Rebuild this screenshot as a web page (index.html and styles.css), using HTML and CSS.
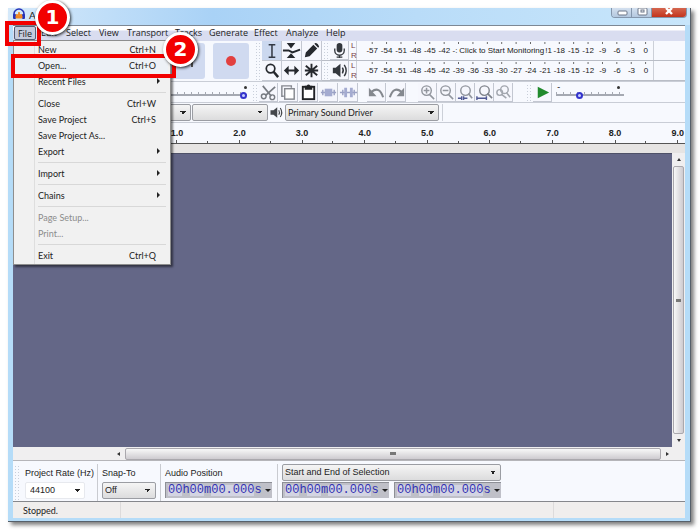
FILE: index.html
```html
<!DOCTYPE html>
<html lang="en">
<head>
    <meta charset="UTF-8">
    <meta name="viewport" content="width=device-width, initial-scale=1.0">
    <title>Audacity</title>
    <link rel="stylesheet" href="styles.css">
</head>
<body>

<div class="window">
    <!-- Title Bar -->
    <div class="titlebar">
        <svg class="logo" viewBox="0 0 12 12"><path d="M1 8V6a5 5 0 0 1 10 0v2" fill="none" stroke="#2433b8" stroke-width="1.6"/><rect x="0" y="6" width="3" height="5" rx="1" fill="#2433b8"/><rect x="9" y="6" width="3" height="5" rx="1" fill="#2433b8"/><path d="M3 8l1-2 1 3 1-5 1 5 1-3 1 2v2H3z" fill="#f08a24" stroke="#f08a24"/></svg>
        <span>Audacity</span>
        <div class="caption-buttons">
            <button aria-label="Minimize"><svg viewBox="0 0 20 10"><rect x="6" y="3" width="9" height="4" rx="1" fill="#fff" stroke="#6c7688"/></svg></button>
            <button aria-label="Maximize"><svg viewBox="0 0 20 10"><rect x="6" y="0" width="9" height="7" rx="1" fill="#fff" stroke="#6c7688"/><rect x="9" y="2" width="3" height="2" fill="none" stroke="#6c7688"/></svg></button>
            <button class="close" aria-label="Close"><svg viewBox="0 0 34 10"><path d="M14 0l6 6M20 0l-6 6" stroke="#fff" stroke-width="2.4"/></svg></button>
        </div>
    </div>

    <div class="client">
        <!-- Menu Bar -->
        <div class="menubar">
            <button class="open">File</button>
            <button class="m-edit">Edit</button>
            <button class="m-select">Select</button>
            <button class="m-view">View</button>
            <button class="m-transport">Transport</button>
            <button class="m-tracks">Tracks</button>
            <button class="m-generate">Generate</button>
            <button class="m-effect">Effect</button>
            <button class="m-analyze">Analyze</button>
            <button class="m-help">Help</button>
        </div>

        <!-- File Menu -->
        <div class="menu">
            <button>New<span>Ctrl+N</span></button>
            <button class="hot">Open...<span>Ctrl+O</span></button>
            <button>Recent Files<i></i></button>
            <hr>
            <button>Close<span>Ctrl+W</span></button>
            <button>Save Project<span>Ctrl+S</span></button>
            <button>Save Project As...</button>
            <button>Export<i></i></button>
            <hr>
            <button>Import<i></i></button>
            <hr>
            <button>Chains<i></i></button>
            <hr>
            <button disabled>Page Setup...</button>
            <button disabled>Print...</button>
            <hr>
            <button>Exit<span>Ctrl+Q</span></button>
        </div>

        <!-- Toolbars -->
        <div class="top-row">
            <div class="transport">
                <button aria-label="Skip to end"><svg viewBox="0 0 36 36"><path d="M10 12l9 6-9 6z" fill="#555"/><path d="M23 12v12" stroke="#555" stroke-width="2"/></svg></button>
                <button aria-label="Record"><svg viewBox="0 0 36 36"><circle cx="18" cy="18" r="5" fill="#e2403f"/></svg></button>
            </div>
            <div class="grip"></div>
            <div class="tools">
                <button class="tool on" aria-label="Selection tool"><svg viewBox="0 0 20 20"><path d="M7 4h7M7 17h7M10.500 4v13" stroke="#333944" stroke-width="1.600"/></svg></button>
                <button class="tool" aria-label="Envelope tool"><svg viewBox="0 0 20 20"><path d="M1 10h6l4 2 8-3" fill="none" stroke="#26292e" stroke-width="2"/><path d="M5 2h9l-4.500 6zM5 18h9l-4.500-5z" fill="#26292e"/></svg></button>
                <button class="tool" aria-label="Draw tool"><svg viewBox="0 0 20 20"><path d="M3 17l1-5 8-8 4 4-8 8zM13 3l1-1q3 0 4 4l-1 1z" fill="#26292e"/></svg></button>
                <button class="tool" aria-label="Zoom tool"><svg viewBox="0 0 20 20"><circle cx="9" cy="8" r="4.500" fill="none" stroke="#26292e" stroke-width="1.800"/><path d="M12 11l5 6" stroke="#26292e" stroke-width="2.600"/></svg></button>
                <button class="tool" aria-label="Time shift tool"><svg viewBox="0 0 20 20"><path d="M2 10l5-5v4h6V5l5 5-5 5v-4H7v4z" fill="#26292e"/></svg></button>
                <button class="tool" aria-label="Multi tool"><svg viewBox="0 0 20 20"><path d="M10 3v14M3 10h14M4 5l12 10M16 5L4 15" stroke="#26292e" stroke-width="2"/></svg></button>
            </div>
            <div class="meters">
                <div class="meter">
                    <div class="grip"></div>
                    <button class="tool" aria-label="Record meter"><svg viewBox="0 0 20 20"><rect x="7" y="2" width="6" height="10" rx="3" fill="#33373d"/><path d="M5 8v2a5 5 0 0 0 10 0V8M10 15v3M7 17h6" fill="none" stroke="#33373d" stroke-width="1.400"/></svg></button>
                    <div class="lr">L<br>R</div>
                    <div class="scale">
                        <span>-57</span><span>-54</span><span>-51</span><span>-48</span><span>-45</span><span>-42</span><span class="cut">-:</span><span class="monitor">Click to Start Monitoring</span><span class="cut">!1</span><span>-18</span><span>-15</span><span>-12</span><span>-9</span><span>-6</span><span>-3</span><span>0</span>
                    </div>
                </div>
                <div class="meter">
                    <div class="grip"></div>
                    <button class="tool" aria-label="Playback meter"><svg viewBox="0 0 20 20"><path d="M3 7h3l5-4v14l-5-4H3z" fill="#33373d"/><path d="M13 7q2 3 0 6M15 4q4 6 0 12" fill="none" stroke="#33373d" stroke-width="1.500"/></svg></button>
                    <div class="lr">L<br>R</div>
                    <div class="scale">
                        <span>-57</span><span>-54</span><span>-51</span><span>-48</span><span>-45</span><span>-42</span><span>-39</span><span>-36</span><span>-33</span><span>-30</span><span>-27</span><span>-24</span><span>-21</span><span>-18</span><span>-15</span><span>-12</span><span>-9</span><span>-6</span><span>-3</span><span>0</span>
                    </div>
                </div>
            </div>
        </div>

        <div class="edit-row">
            <div class="mixer"><input type="range" min="0" max="100" value="100" aria-label="Recording volume"></div>
            <div class="grip"></div>
            <div class="group">
                <button class="tool" aria-label="Cut"><svg viewBox="0 0 20 20"><path d="M4 3l9 11M17 4L7 13" stroke="#777b82" stroke-width="1.800"/><circle cx="5" cy="14" r="2.500" fill="none" stroke="#777b82" stroke-width="1.500"/><circle cx="14" cy="15" r="2.500" fill="none" stroke="#777b82" stroke-width="1.500"/></svg></button>
                <button class="tool" aria-label="Copy"><svg viewBox="0 0 20 20"><path d="M5 14H3V3h10v2" fill="none" stroke="#85888f" stroke-width="1.500"/><rect x="6" y="6" width="10" height="11" fill="#fff" stroke="#85888f" stroke-width="1.500"/></svg></button>
                <button class="tool" aria-label="Paste"><svg viewBox="0 0 20 20"><rect x="4" y="4" width="12" height="13" fill="#fff" stroke="#202226" stroke-width="2"/><path d="M6 7V3h2q2-3 4 0h2v4z" fill="#202226"/></svg></button>
                <button class="tool" aria-label="Trim"><svg viewBox="0 0 20 20"><path d="M2 10h16M4 7v6M16 7v6" stroke="#9aa1c4" stroke-width="1.500"/><rect x="6" y="6" width="8" height="8" fill="#a4abd0"/></svg></button>
                <button class="tool" aria-label="Silence"><svg viewBox="0 0 20 20"><path d="M1 10h18M4 7v6M16 7v6" stroke="#9aa1c4" stroke-width="1.500"/><path d="M7 5v10M13 5v10" stroke="#a4abd0" stroke-width="3"/></svg></button>
            </div>
            <div class="group history">
                <button class="tool" aria-label="Undo"><svg viewBox="0 0 20 20"><path d="M5 9q8-6 12 6" fill="none" stroke="#85898f" stroke-width="2.200"/><path d="M2 5v9h8z" fill="#85898f"/></svg></button>
                <button class="tool" aria-label="Redo"><svg viewBox="0 0 20 20"><path d="M15 9Q7 3 3 15" fill="none" stroke="#85898f" stroke-width="2.200"/><path d="M18 5v9h-8z" fill="#85898f"/></svg></button>
            </div>
            <div class="group zooms">
                <button class="tool" aria-label="Zoom in"><svg viewBox="0 0 20 20"><circle cx="9" cy="8" r="5" fill="none" stroke="#92969e" stroke-width="1.500"/><path d="M12 12l5 5M6 8h6M9 5v6" stroke="#92969e" stroke-width="1.600"/></svg></button>
                <button class="tool" aria-label="Zoom out"><svg viewBox="0 0 20 20"><circle cx="9" cy="8" r="5" fill="none" stroke="#92969e" stroke-width="1.500"/><path d="M12 12l5 5M6 8h6" stroke="#92969e" stroke-width="1.600"/></svg></button>
                <button class="tool" aria-label="Fit selection"><svg viewBox="0 0 20 20"><circle cx="10" cy="8" r="5" fill="none" stroke="#92969e" stroke-width="1.500"/><path d="M13 11l4 5" stroke="#92969e" stroke-width="1.800"/><path d="M2 16h4M8 16h4M6 14v4M8 14v4" stroke="#515a94" stroke-width="1.500"/></svg></button>
                <button class="tool" aria-label="Fit project"><svg viewBox="0 0 20 20"><circle cx="10" cy="8" r="5" fill="none" stroke="#7f838b" stroke-width="1.500"/><path d="M13 11l5 5" stroke="#7f838b" stroke-width="1.800"/><path d="M2 16h10M2 14v4M12 14v4" stroke="#515a94" stroke-width="1.500"/></svg></button>
                <button class="tool" aria-label="Zoom toggle"><svg viewBox="0 0 20 20"><circle cx="11" cy="7" r="4" fill="none" stroke="#a2a6ae" stroke-width="1.500"/><circle cx="6" cy="10" r="3" fill="none" stroke="#a2a6ae" stroke-width="1.500"/><path d="M13 10l4 5M8 12l5 4" stroke="#a2a6ae" stroke-width="1.600"/></svg></button>
            </div>
            <div class="grip play-grip"></div>
            <button class="tool" aria-label="Play at speed"><svg viewBox="0 0 20 20"><path d="M5 4l12 6-12 6z" fill="#218a2d"/></svg></button>
            <div class="speed"><input type="range" min="0" max="100" value="32" aria-label="Playback speed"></div>
        </div>

        <div class="device-row">
            <select class="host" aria-label="Audio host"><option></option></select>
            <select class="input-device" aria-label="Recording device"><option></option></select>
            <svg viewBox="0 0 20 20"><path d="M2 7h4l5-4v14l-5-4H2z" fill="#44474c"/><path d="M13 7q2 3 0 6M15 4q4 6 0 12" fill="none" stroke="#44474c" stroke-width="1.500"/></svg>
            <select class="output-device" aria-label="Playback device"><option>Primary Sound Driver</option></select>
            <div class="edge"></div>
        </div>

        <!-- Timeline -->
        <div class="ruler">
            <span></span><span>1.0</span><span>2.0</span><span>3.0</span><span>4.0</span><span>5.0</span><span>6.0</span><span>7.0</span><span>8.0</span><span>9.0</span>
        </div>
        <div class="workspace">
            <div class="tracks"></div>
            <div class="vscroll"><i class="up"></i><div class="thumb"></div><i class="down"></i></div>
        </div>
        <div class="hscroll"><i class="left"></i><div class="thumb"></div><i class="right"></i></div>

        <!-- Selection Toolbar -->
        <div class="selection">
            <div class="grip"></div>
            <div class="field rate">
                <label for="rate">Project Rate (Hz)</label>
                <select id="rate"><option>44100</option></select>
            </div>
            <div class="field snap">
                <label for="snap">Snap-To</label>
                <select id="snap"><option>Off</option></select>
            </div>
            <div class="field position">
                <label for="position">Audio Position</label>
                <div class="time"><input id="position" type="text" value="00h00m00.000s"></div>
            </div>
            <div class="field range">
                <select aria-label="Selection mode"><option>Start and End of Selection</option></select>
                <div class="times">
                    <div class="time"><input type="text" value="00h00m00.000s" aria-label="Selection start"></div>
                    <div class="time"><input type="text" value="00h00m00.000s" aria-label="Selection end"></div>
                </div>
            </div>
        </div>
        <div class="status"><span>Stopped.</span><span></span><span></span></div>
    </div>

    <!-- Step Markers -->
    <div class="outline outline-file"></div>
    <div class="outline outline-open"></div>
    <div class="step step-one">1</div>
    <div class="step step-two">2</div>
</div>

</body>
</html>
```
FILE: styles.css
```css
* {
    box-sizing: border-box;
}

body {
    margin: 0;
    padding: 8px;
    background: #fff;
    font-family: Lato, "Liberation Sans", sans-serif;
    font-size: 9px;
    color: #222;
}

button, select, input {
    font: inherit;
    color: inherit;
    margin: 0;
    padding: 0;
}

button {
    border: 0;
    background: none;
}

/* Window Frame */
.window {
    position: relative;
    height: calc(100vh - 17px);
    display: flex;
    flex-direction: column;
    padding: 0 5px 3px;
    margin-right: 1px;
    background: #b5dcf8;
    border-right: 1px solid #56606a;
    border-bottom: 1px solid #56606a;
    box-shadow: 3px 3px 4px rgba(0, 0, 0, 0.5);
}

.titlebar {
    display: flex;
    flex: none;
    height: 17px;
    margin: 0 -5px;
    padding-left: 5px;
    gap: 4px;
    background: linear-gradient(90deg, #d5e9fa, #a9d2f6 30%, #b9dcf8 60%, #c8e6fb);
    font-size: 10px;
    line-height: 14px;
}

.logo {
    width: 12px;
    height: 12px;
}

.caption-buttons {
    display: flex;
    height: 10px;
    margin: 0 3px 0 auto;
    border: 1px solid #8496ac;
    border-top: 0;
    border-radius: 0 0 4px 4px;
    overflow: hidden;
}

.caption-buttons button {
    width: 20px;
    height: 9px;
    background: linear-gradient(#d3e0ef, #b4c8df);
    border-right: 1px solid #8496ac;
}

.caption-buttons svg {
    display: block;
    height: 10px;
}

.caption-buttons .close {
    width: 34px;
    background: linear-gradient(#d4664f, #c3341c);
    border: 0;
}

.client {
    position: relative;
    flex: 1;
    min-height: 0;
    display: flex;
    flex-direction: column;
    background: #f7f9fe;
    border-top: 1px solid #7d8894;
}

/* Menu Bar */
.menubar {
    display: flex;
    flex: none;
    height: 15px;
    padding-left: 1px;
    background: linear-gradient(#fff 0, #fff 4px, #d9ddf0 5px, #d9ddf0);
    font-family: "Open Sans", sans-serif;
    line-height: 14px;
}

.menubar button {
    text-align: left;
    white-space: nowrap;
    height: 14px;
}

.menubar .open {
    width: 22px;
    border: 1px solid #555e74;
    border-radius: 2px;
    background: #c5cbdd;
    line-height: 11px;
    text-align: center;
}

.menubar .m-edit { width: 30px; padding-left: 5px; }
.m-select { width: 33px; }
.m-view { width: 28px; }
.m-transport { width: 48px; }
.m-tracks { width: 34px; }
.m-generate { width: 45px; }
.m-effect { width: 32px; }
.m-analyze { width: 40px; }

/* File Menu */
.menu {
    position: absolute;
    top: 14px;
    left: 0;
    z-index: 2;
    width: 158px;
    padding: 0 2px 1px;
    background: linear-gradient(90deg, #f1f1f1 20px, #dedede 20px, #dedede 21px, #f1f1f1 21px);
    border: 1px solid #8e8e8e;
    box-shadow: 2px 2px 2px rgba(0, 0, 0, 0.5);
}

.menu button {
    display: flex;
    align-items: center;
    width: 100%;
    height: 16px;
    padding-left: 22px;
}

.menu button span {
    margin-left: auto;
    padding-right: 12px;
}

.menu i {
    margin: 0 8px 0 auto;
    border: 3px solid transparent;
    border-left: 3px solid #222;
    border-right: 0;
}

.menu button:disabled {
    color: #8c8c8c;
}

.menu .hot {
    background: #edf1f6;
}

.menu hr {
    height: 1px;
    margin: 3px 2px 2px 22px;
    border: 0;
    background: #d8d8d8;
}

/* Toolbars */
.grip {
    flex: none;
    width: 6px;
    margin: 1px;
    background: radial-gradient(circle, #c9cfda 1px, transparent 1px) 0 0 / 3px 3px;
}

.tool {
    flex: none;
    width: 19px;
    height: 19px;
    border-right: 1px solid #c3c7d1;
    border-bottom: 1px solid #c3c7d1;
    background: #f6f7fd;
}

.tool.on {
    background: #cbd8ef;
}

.tool svg {
    display: block;
    width: 19px;
    height: 19px;
}

.top-row {
    display: flex;
    flex: none;
    height: 41px;
    border-bottom: 1px solid #c9cdd6;
}

.transport {
    display: flex;
    gap: 8px;
    padding: 2px 5px 2px 156px;
}

.transport button {
    width: 36px;
    height: 36px;
    border-radius: 3px;
    background: #d0daf0;
}

.transport svg {
    display: block;
    width: 36px;
    height: 36px;
}

.tools {
    display: grid;
    grid-template-columns: repeat(3, 20px);
    grid-auto-rows: 20px;
}

.tools .tool {
    width: 20px;
    height: 20px;
}

.meters {
    flex: 1;
    min-width: 0;
}

.meter {
    display: flex;
    height: 20px;
    border-bottom: 1px solid #b9bdc6;
}

.lr {
    width: 8px;
    padding-left: 2px;
    border-right: 1px solid #ccd0d8;
    font: 8px/10px "Liberation Sans", sans-serif;
    color: #7a3f46;
}

.scale {
    display: flex;
    width: 297px;
    padding: 1px 0 0 8px;
    border-right: 1px solid #ccd0d8;
    background: linear-gradient(90deg, transparent 7px, #666 7px, #666 8px, transparent 8px) 0 0 / 5% 2px repeat-x content-box;
    font: 8px/10px "Liberation Sans", sans-serif;
}

.scale span {
    flex: 1 1 0;
    min-width: 0;
    padding-top: 4px;
    text-align: center;
    white-space: nowrap;
}

.scale .cut {
    flex: 0 0 7px;
}

.scale .monitor {
    flex: 6 1 0;
}

.edit-row {
    display: flex;
    flex: none;
    height: 21px;
    padding-top: 1px;
    border-bottom: 1px solid #c9cdd6;
}

.mixer {
    position: relative;
    width: 238px;
    padding: 5px 4px 0 150px;
}

.group {
    display: flex;
    gap: 1px;
}

.history {
    margin-left: 9px;
}

.zooms {
    gap: 0;
    margin-left: 12px;
}

.play-grip {
    margin-left: 13px;
}

input[type="range"] {
    display: block;
    appearance: none;
    width: 100%;
    height: 12px;
    background: linear-gradient(#a5a9b2, #a5a9b2) 0 6px / 100% 2px no-repeat, repeating-linear-gradient(90deg, #a5a9b2 0, #a5a9b2 1px, transparent 1px, transparent 7px) 0 4px / 100% 2px no-repeat;
}

input[type="range"]::-webkit-slider-thumb {
    appearance: none;
    width: 7px;
    height: 7px;
    border: 2px solid #3434cc;
    border-radius: 50%;
    background: #c7cfff;
    margin-top: 2px;
}

.speed {
    position: relative;
    width: 68px;
    margin-left: 4px;
    padding-top: 5px;
}

.speed::before {
    content: "-";
    position: absolute;
    top: -2px;
    left: 1px;
}

.speed::after, .mixer::after {
    content: "";
    position: absolute;
    top: 3px;
    right: 4px;
    width: 3px;
    height: 3px;
    border-radius: 50%;
    background: #333;
}

/* Drop-downs */
select {
    appearance: none;
    height: 17px;
    padding: 0 12px 0 2px;
    border: 1px solid #9b9da3;
    border-radius: 2px;
    background: linear-gradient(-135deg, #222 50%, transparent 50%) right 7px center / 3px 3px no-repeat, linear-gradient(135deg, #222 50%, transparent 50%) right 4px center / 3px 3px no-repeat, linear-gradient(#f5f5f5, #dcdcdd);
}

.device-row {
    display: flex;
    flex: none;
    align-items: center;
    height: 19px;
}

.host {
    width: 178px;
}

.input-device {
    width: 76px;
    margin-left: 1px;
}

.device-row svg {
    width: 15px;
    height: 15px;
    margin: 0 1px;
}

.output-device {
    width: 154px;
}

.edge {
    width: 4px;
    height: 17px;
    border-right: 1px solid #ccd0d8;
}

/* Timeline */
.ruler {
    display: flex;
    flex: none;
    height: 22px;
    padding-left: 70px;
    overflow: hidden;
    border-top: 1px solid #c9cdd6;
    border-bottom: 1px solid #555;
    font: bold 9px/20px "Liberation Sans", sans-serif;
}

.ruler span {
    flex: 0 0 10.4%;
    text-align: center;
    background: linear-gradient(#555, #555) 50% 100% / 1px 3px no-repeat, linear-gradient(#555, #555) 100% 100% / 1px 2px no-repeat;
}

.workspace {
    flex: 1;
    min-height: 0;
    display: flex;
    border-top: 9px solid #e6e4e3;
}

.tracks {
    flex: 1;
    background: #646787;
    border-top: 1px solid #4e5168;
}

.vscroll, .hscroll {
    display: flex;
    align-items: center;
    background: #f0eff0;
}

.vscroll {
    flex-direction: column;
    width: 13px;
    padding: 5px 0;
    gap: 5px;
}

.hscroll {
    flex: none;
    height: 14px;
    padding: 0 16px 0 104px;
    gap: 5px;
    border-bottom: 1px solid #b5b5b9;
}

.thumb {
    flex: 1;
    border: 1px solid #aaa8ad;
    border-radius: 2px;
}

.vscroll .thumb {
    width: 11px;
    background: linear-gradient(#777, #777) center / 5px 3px no-repeat, linear-gradient(90deg, #f8f8f8, #cecbd0);
}

.hscroll .thumb {
    height: 12px;
    background: linear-gradient(#777, #777) center / 6px 3px no-repeat, linear-gradient(#f8f8f8, #cecbd0);
}

.up, .down, .left, .right {
    border: 2px solid transparent;
}

.up { border-bottom: 3px solid #333; border-top: 0; }
.down { border-top: 3px solid #333; border-bottom: 0; }
.left { border-right: 3px solid #333; border-left: 0; }
.right { border-left: 3px solid #333; border-right: 0; }

/* Selection Toolbar */
.selection {
    display: flex;
    flex: none;
    height: 41px;
    padding-top: 3px;
    border-bottom: 1px solid #85878c;
    font: 9px/15px "Liberation Sans", sans-serif;
}

.field {
    display: flex;
    flex-direction: column;
    gap: 1px;
    padding-left: 4px;
}

.field label {
    height: 17px;
    line-height: 18px;
    white-space: nowrap;
}

.field + .field {
    border-left: 1px solid #c9cbd0;
}

.rate { width: 76px; }
.rate select { width: 60px; border-color: #e7e9ee; }
.snap { width: 63px; }
.snap select { width: 54px; }
.position { width: 117px; }
.range select { width: 219px; }

#rate {
    padding-left: 4px;
    background: linear-gradient(-135deg, #222 50%, transparent 50%) right 7px center / 3px 3px no-repeat, linear-gradient(135deg, #222 50%, transparent 50%) right 4px center / 3px 3px no-repeat, #fff;
}

.times {
    display: flex;
    gap: 5px;
}

.time {
    position: relative;
    width: 107px;
    height: 16px;
    border-top: 1px solid #8d8f96;
    border-left: 1px solid #8d8f96;
    background: #bfc0c8;
}

.time input {
    display: block;
    width: 98px;
    height: 15px;
    padding-left: 2px;
    border: 0;
    background: linear-gradient(90deg, #d3d4e2 2ch, #bfc0c8 2ch, #bfc0c8 3ch, #d3d4e2 3ch, #d3d4e2 5ch, #bfc0c8 5ch, #bfc0c8 6ch, #d3d4e2 6ch, #d3d4e2 12ch, #bfc0c8 12ch) 2px 2px / 100% 11px no-repeat;
    color: #3232b4;
    font: 12px/15px "Liberation Mono", monospace;
}

.time::after {
    content: "";
    position: absolute;
    right: 1px;
    top: 6px;
    border: 3px solid transparent;
    border-top: 3px solid #222;
    border-bottom: 0;
}

/* Status Bar */
.status {
    display: flex;
    flex: none;
    height: 16px;
    padding-left: 10px;
    background: #f0eeed;
    line-height: 18px;
}

.status span {
    width: 98px;
    border-right: 1px solid #dddbdb;
}

.status span:nth-child(2) {
    flex: 1;
}

.status span:last-child {
    width: 131px;
    border: 0;
}

/* Step Markers */
.outline {
    position: absolute;
    z-index: 3;
    border: 4px solid #f20000;
}

.outline-file {
    left: -3px;
    top: 13px;
    width: 36px;
    height: 25px;
}

.outline-open {
    left: 3px;
    top: 46px;
    width: 165px;
    height: 24px;
}

.step {
    position: absolute;
    z-index: 4;
    width: 35px;
    height: 35px;
    border: 3px solid #fff;
    border-radius: 50%;
    background: #f20000;
    box-shadow: 1px 1px 3px rgba(0, 0, 0, 0.8);
    color: #fff;
    font: bold 20px/29px "DejaVu Sans", sans-serif;
    text-align: center;
}

.step-one {
    left: 27px;
    top: -8px;
}

.step-two {
    left: 155px;
    top: 24px;
}
```
